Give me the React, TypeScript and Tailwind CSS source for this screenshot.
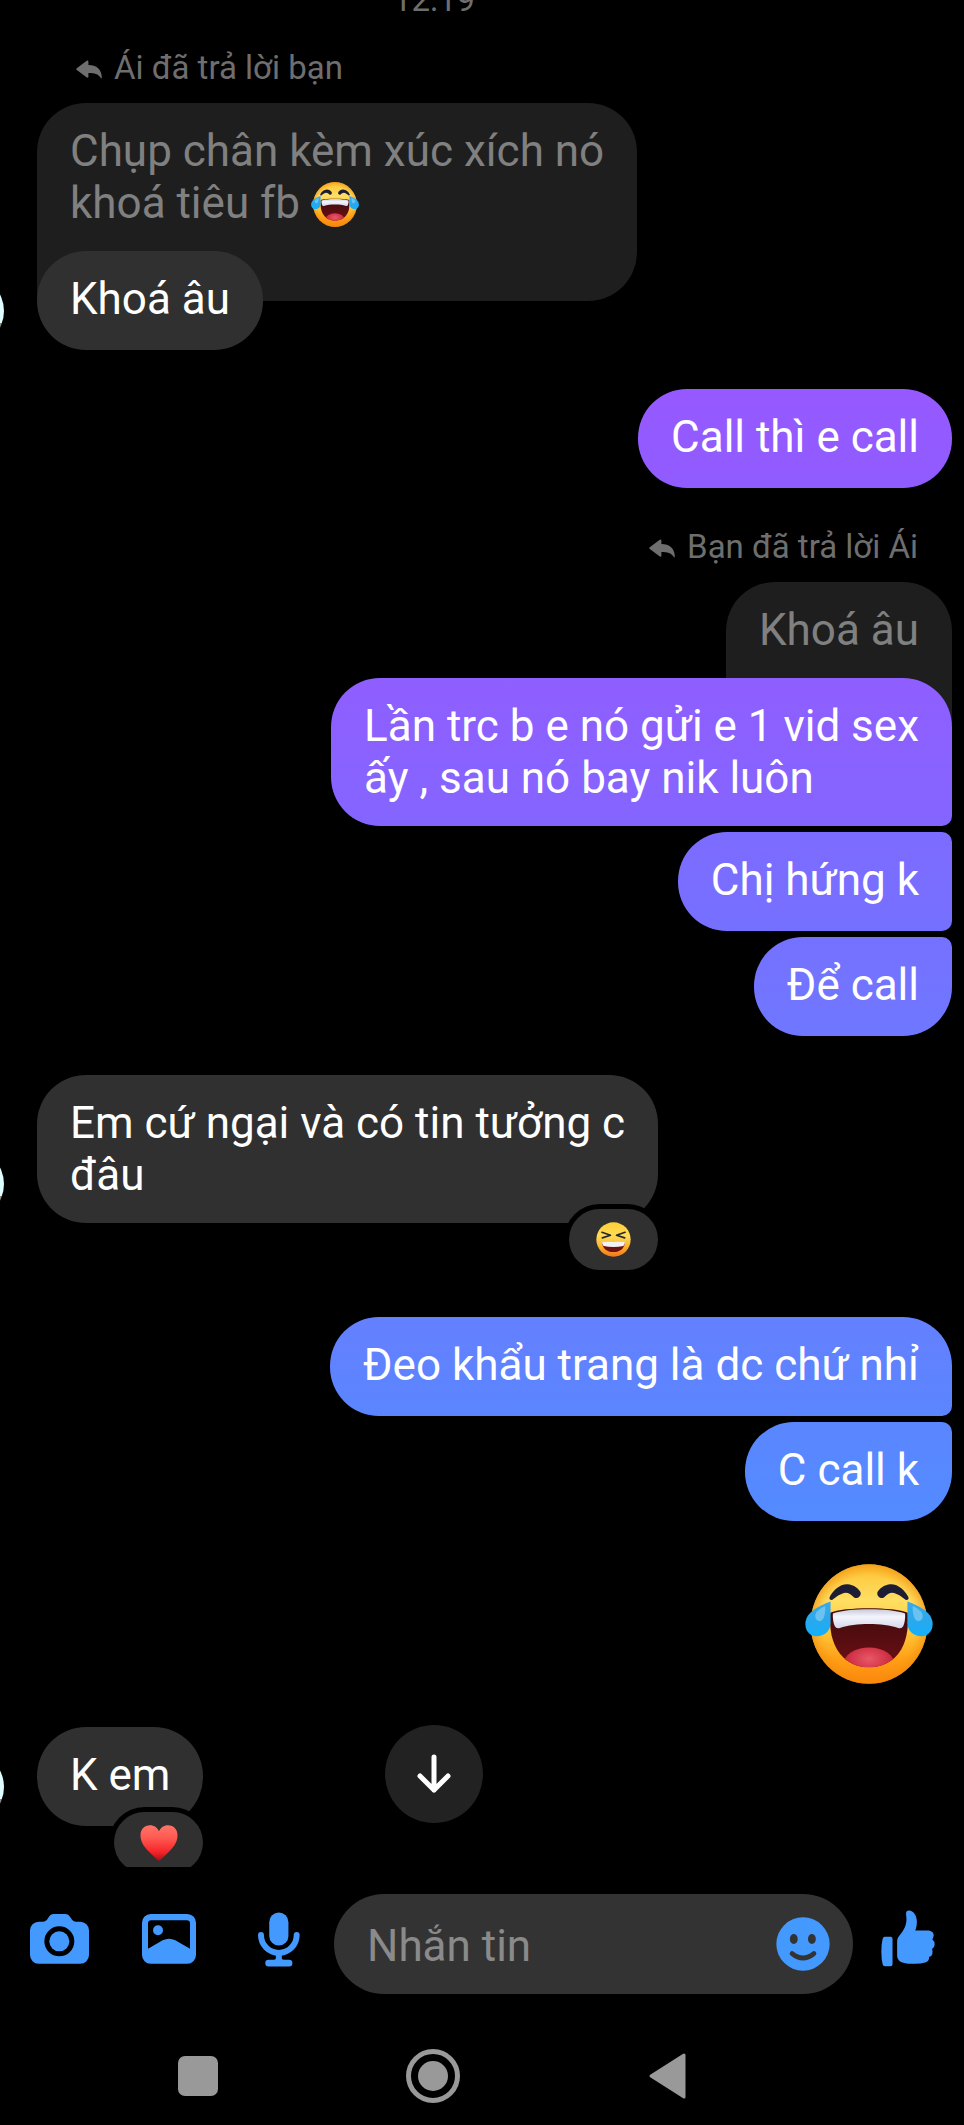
import { useId, type ReactNode } from "react";

// ---- emoji ----

const LaughEmoji = ({ className }: { className: string }) => {
  const id = useId();
  return (
    <svg viewBox="75 71 386 362" className={className} role="img" aria-label="😂">
      <defs>
        <linearGradient id={id + "face"} x1="0" y1="0" x2="0" y2="1">
          <stop offset="0" stopColor="#fdc132" />
          <stop offset="0.3" stopColor="#ffdf63" />
          <stop offset="0.55" stopColor="#ffc93a" />
          <stop offset="0.8" stopColor="#ff9f16" />
          <stop offset="1" stopColor="#ff830d" />
        </linearGradient>
        <radialGradient id={id + "shade"}>
          <stop offset="0.8" stopColor="#f59a10" stopOpacity="0" />
          <stop offset="1" stopColor="#f08a0a" stopOpacity="0.6" />
        </radialGradient>
        <linearGradient id={id + "mouth"} x1="0" y1="0" x2="0" y2="1">
          <stop offset="0" stopColor="#3d0a0c" />
          <stop offset="1" stopColor="#6f1015" />
        </linearGradient>
        <linearGradient id={id + "teeth"} x1="0" y1="0" x2="0" y2="1">
          <stop offset="0" stopColor="#c9cadb" />
          <stop offset="0.4" stopColor="#f4f5fd" />
          <stop offset="1" stopColor="#d3d6ec" />
        </linearGradient>
        <radialGradient id={id + "tongue"} cx="0.5" cy="0.35">
          <stop offset="0" stopColor="#e85868" />
          <stop offset="1" stopColor="#c9263a" />
        </radialGradient>
        <linearGradient id={id + "tear"} x1="0" y1="0" x2="0" y2="1">
          <stop offset="0" stopColor="#3aa9e8" />
          <stop offset="0.6" stopColor="#27a9ee" />
          <stop offset="1" stopColor="#12b0fb" />
        </linearGradient>
        <clipPath id={id + "clip"}>
          <path d="M151 218C190 200 345 200 385 218C388 270 380 320 347 352C302 393 233 393 190 352C156 318 148 270 151 218Z" />
        </clipPath>
      </defs>
      <ellipse cx="268" cy="252" rx="176" ry="180" fill={`url(#${id}face)`} />
      <ellipse cx="268" cy="252" rx="176" ry="180" fill={`url(#${id}shade)`} />
      <g clipPath={`url(#${id}clip)`}>
        <rect x="145" y="200" width="245" height="190" fill={`url(#${id}mouth)`} />
        <ellipse cx="268" cy="372" rx="76" ry="49" fill={`url(#${id}tongue)`} />
      </g>
      <path
        d="M159 220C200 203 336 203 377 220Q378 243 371 259Q367 267 356 264C310 248 226 248 180 264Q169 267 165 259Q158 243 159 220Z"
        fill={`url(#${id}teeth)`}
      />
      {[undefined, "translate(536 0) scale(-1 1)"].map((t, i) => (
        <g key={i} transform={t}>
          <path
            d="M149 171C159 151 180 131 203 132C222 133 239 146 243 158C244 171 232 177 223 172C214 164 207 158 198 158C182 160 170 170 158 179Q147 181 149 171Z"
            fill="#1d1d33"
          />
          <path
            d="M152 184L152 250C151 275 133 289 110 289C88 289 75 271 76 249C79 214 120 196 152 184Z"
            fill={`url(#${id}tear)`}
          />
          <path d="M136 198C120 206 108 214 106 226C105 240 116 245 124 242C134 237 137 215 136 198Z" fill="#a6dcf7" opacity="0.5" />
        </g>
      ))}
    </svg>
  );
};

const SquintEmoji = () => (
  <svg viewBox="135 92 106 106" className="h-[35px] w-[35px]" role="img" aria-label="😆">
    <defs>
      <linearGradient id="squint-face" x1="0" y1="0" x2="0" y2="1">
        <stop offset="0" stopColor="#fdcf35" />
        <stop offset="0.4" stopColor="#ffdb57" />
        <stop offset="0.7" stopColor="#fdb32c" />
        <stop offset="1" stopColor="#f4741c" />
      </linearGradient>
    </defs>
    <circle cx="188" cy="145" r="52" fill="url(#squint-face)" />
    <path d="M153 123L179 132L154 140M223 123L197 132L222 140" fill="none" stroke="#26262e" strokeWidth="5" strokeLinecap="round" strokeLinejoin="round" />
    <path d="M153 151Q188 156 223 151C222 172 208 183 188 183C168 183 154 172 153 151Z" fill="#6d1212" />
    <path d="M153 150Q188 155 223 150Q223 160 218 165Q188 171 158 165Q153 160 153 150Z" fill="#f2f1f4" />
  </svg>
);

const HeartEmoji = () => (
  <svg viewBox="422 374 114 109" className="h-[36px] w-[38px]" role="img" aria-label="❤️">
    <defs>
      <linearGradient id="heart-fill" x1="0" y1="0" x2="0" y2="1">
        <stop offset="0" stopColor="#ff7468" />
        <stop offset="0.35" stopColor="#ff5a52" />
        <stop offset="0.75" stopColor="#f6262b" />
        <stop offset="1" stopColor="#a80f16" />
      </linearGradient>
    </defs>
    <path
      d="M479 482C470 478 461 466 448 454C432 438 423 424 423 405C423 387 435 375 452 375C464 375 474 382 479 393C484 382 494 375 506 375C523 375 535 387 535 405C535 424 526 438 510 454C497 466 488 478 479 482Z"
      fill="url(#heart-fill)"
    />
  </svg>
);

// ---- icons ----

const ReplyIcon = () => (
  <svg viewBox="0 0 26 19" className="mt-[3px] h-[19px] w-[26px] fill-current" aria-hidden="true">
    <path d="M.8 8.2L10.4 1Q12.4-.2 12.4 2V5C20.5 5 25.8 9.5 25.8 17.6Q25.7 19.4 24.6 17.8C22.3 13.8 18.5 12.9 12.4 12.9V16.4Q12.4 18.5 10.5 17.3L.8 10Q-.3 9.1 .8 8.2Z" />
  </svg>
);

const CameraIcon = () => (
  <svg viewBox="89 102 177 150" className="h-[50px] w-[59px] fill-current" aria-hidden="true">
    <path
      fillRule="evenodd"
      d="M115 125h12c8 0 12-3 16-10c5-9 9-13 18-13h33c9 0 13 4 18 13c4 7 8 10 16 10h12a26 26 0 0 1 26 26v74a26 26 0 0 1-26 26H115a26 26 0 0 1-26-26v-74a26 26 0 0 1 26-26ZM132 184a45 45 0 1 0 90 0a45 45 0 1 0-90 0Z"
    />
    <circle cx="177" cy="184" r="30" />
  </svg>
);

const GalleryIcon = () => (
  <svg viewBox="426 102 162 150" className="h-[50px] w-[54px] fill-current" aria-hidden="true">
    <path
      fillRule="evenodd"
      d="M452 102h110a26 26 0 0 1 26 26v97a26 26 0 0 1-26 26H452a26 26 0 0 1-26-26v-97a26 26 0 0 1 26-26ZM454 121a10 10 0 0 0-10 10v75l44-25q19-9 38 0l44 25v-75a10 10 0 0 0-10-10Z"
    />
    <circle cx="474" cy="151" r="15" />
  </svg>
);

const MicIcon = () => (
  <svg viewBox="774 95 127 165" className="h-[55px] w-[42px] fill-current" aria-hidden="true">
    <rect x="808" y="96" width="58" height="100" rx="29" />
    <path d="M783 164a54 54 0 0 0 108 0" fill="none" stroke="currentColor" strokeWidth="18" strokeLinecap="round" />
    <path d="M828 220h18v14q0 5 8 5h14a9.500 9.500 0 0 1 0 20h-62a9.500 9.500 0 0 1 0-20h14q8 0 8-5Z" />
  </svg>
);

const SmileIcon = () => (
  <svg viewBox="107 110 164 164" className="h-[54px] w-[54px]" aria-hidden="true">
    <circle cx="189" cy="192" r="81" fill="currentColor" />
    <ellipse cx="161" cy="177" rx="12" ry="15" fill="#333" />
    <ellipse cx="216" cy="177" rx="12" ry="15" fill="#333" />
    <path d="M156 221Q189 248 222 221" fill="none" stroke="#333" strokeWidth="15" strokeLinecap="round" />
  </svg>
);

const LikeIcon = () => (
  <svg viewBox="422 88 164 172" className="h-[57px] w-[54px] fill-current" aria-hidden="true">
    <path d="M434 169h17q6 0 6 6v77q0 6-6 6h-17q-6 0-7-6q-4-16-4-38t4-39q1-6 7-6Z" />
    <path d="M471 182C471 173 476 167 483 159C494 144 501 128 499 110L498 98Q498 89 507 89C521 90 531 104 531 124C531 136 528 144 526 150H562C574 150 582 155 582 164Q582 171 578 176Q585 182 585 192Q585 201 577 206Q580 213 578 221Q576 228 568 230Q569 243 556 247Q545 251 525 251C498 251 483 248 476 240Q471 235 471 227Z" />
  </svg>
);

// ---- messages ----

const Avatar = () => (
  <div className="mb-[3px] -ml-[68px] h-[72px] w-[72px] shrink-0 rounded-full bg-linear-to-b from-[#dffcff] from-67% to-[#94877f] to-67%" />
);

const ReplyLabel = ({ mine, children }: { mine?: boolean; children: ReactNode }) => (
  <div
    className={`mb-4 flex items-center gap-3 text-[33px] leading-[38px] text-[#6e6e6e] ${
      mine ? "mt-10 self-end pr-[46px]" : "mt-[30px] pl-[76px]"
    }`}
  >
    <ReplyIcon />
    <span>{children}</span>
  </div>
);

const Quote = ({ mine, children }: { mine?: boolean; children: ReactNode }) => (
  <div
    className={`-mb-[50px] max-w-[622px] rounded-t-[49px] bg-[#1e1e1e] px-[33px] pt-[22px] pb-[72px] text-[#808080] ${
      mine ? "mr-3 self-end rounded-bl-[49px]" : "ml-[37px] self-start rounded-br-[49px]"
    }`}
  >
    {children}
  </div>
);

const Incoming = ({ reaction, children }: { reaction?: ReactNode; children: ReactNode }) => (
  <div className="relative flex items-end gap-[33px]">
    <Avatar />
    <div className="relative min-h-[99px] max-w-[622px] rounded-[49px] bg-[#303030] px-[33px] py-[22px]">
      {children}
      {reaction && (
        <div className="absolute top-full right-0 -mt-[14px] flex h-[61px] w-[89px] items-center justify-center rounded-full bg-[#303030] shadow-[0_0_0_5px_#000]">
          {reaction}
        </div>
      )}
    </div>
  </div>
);

const Outgoing = ({ className, children }: { className: string; children: ReactNode }) => (
  <div
    className={`relative mr-3 min-h-[99px] max-w-[622px] self-end rounded-l-[49px] bg-linear-to-b px-[33px] py-[22px] ${className}`}
  >
    {children}
  </div>
);

const Composer = () => (
  <form className="flex items-center py-[27px] pr-[29px] pl-[29px] text-[#4499ff]">
    <div className="mr-[25px] flex gap-[50px] pb-[10px]">
      <button type="button" aria-label="Camera" className="flex w-[60px] items-center justify-center">
        <CameraIcon />
      </button>
      <button type="button" aria-label="Gallery" className="flex w-[60px] items-center justify-center">
        <GalleryIcon />
      </button>
      <button type="button" aria-label="Voice" className="flex w-[60px] items-center justify-center">
        <MicIcon />
      </button>
    </div>
    <div className="flex h-[100px] min-w-0 flex-1 items-center rounded-full bg-[#333] pr-[23px] pl-[33px]">
      <input
        type="text"
        aria-label="Nhắn tin"
        placeholder="Nhắn tin"
        className="min-w-0 flex-1 bg-transparent pt-1 text-white outline-none placeholder:text-[#8a8a8a]"
      />
      <button type="button" aria-label="Emoji">
        <SmileIcon />
      </button>
    </div>
    <button type="button" aria-label="Like" className="ml-7 pb-3">
      <LikeIcon />
    </button>
  </form>
);

const SystemNav = () => (
  <nav className="grid grid-cols-3 place-items-center pt-7 pr-[179px] pb-[22px] pl-20 text-[#999]">
    <button type="button" aria-label="Recents" className="h-10 w-10 rounded-[7px] bg-current" />
    <button type="button" aria-label="Home" className="flex h-[54px] w-[54px] items-center justify-center rounded-full border-[5px] border-current">
      <span className="h-[30px] w-[30px] rounded-full bg-current" />
    </button>
    <button type="button" aria-label="Back">
      <svg viewBox="0 0 37 46" className="h-[46px] w-[37px]" aria-hidden="true">
        <path d="M2 23L35 2V44Z" fill="currentColor" stroke="currentColor" strokeWidth="3" strokeLinejoin="round" />
      </svg>
    </button>
  </nav>
);

const App = () => {
  return (
    <div className="min-h-screen overflow-hidden bg-black font-['Roboto','Noto_Sans',sans-serif] text-[44px] leading-[52px] text-white">
      <main className="relative flex flex-col overflow-hidden pb-[41px]">
        <time className="-mt-[19px] pr-24 text-center text-[33px] leading-[38px] text-[#6e6e6e]">12:19</time>

        <ReplyLabel>Ái đã trả lời bạn</ReplyLabel>
        <Quote>
          Chụp chân kèm xúc xích nó
          <br />
          khoá tiêu fb <LaughEmoji className="-mt-1 inline h-[45px] w-[48px]" />
        </Quote>
        <Incoming>Khoá âu</Incoming>

        <div className="mt-[39px] flex flex-col">
          <Outgoing className="rounded-r-[49px] from-[#9659ff] to-[#905cff]">Call thì e call</Outgoing>
        </div>

        <ReplyLabel mine>Bạn đã trả lời Ái</ReplyLabel>
        <Quote mine>Khoá âu</Quote>
        <div className="flex flex-col gap-[6px]">
          <Outgoing className="rounded-tr-[49px] rounded-br-[10px] from-[#8f5eff] to-[#8465ff]">
            Lần trc b e nó gửi e 1 vid sex
            <br />
            ấy , sau nó bay nik luôn
          </Outgoing>
          <Outgoing className="rounded-r-[10px] from-[#7d6bff] to-[#7570ff]">Chị hứng k</Outgoing>
          <Outgoing className="rounded-tr-[10px] rounded-br-[49px] from-[#7571ff] to-[#6f77ff]">Để call</Outgoing>
        </div>

        <div className="mt-[39px] mb-[94px]">
          <Incoming reaction={<SquintEmoji />}>
            Em cứ ngại và có tin tưởng c
            <br />
            đâu
          </Incoming>
        </div>

        <div className="flex flex-col gap-[6px]">
          <Outgoing className="rounded-tr-[49px] rounded-br-[10px] from-[#6480ff] to-[#5b85ff]">
            Đeo khẩu trang là dc chứ nhỉ
          </Outgoing>
          <Outgoing className="rounded-tr-[10px] rounded-br-[49px] from-[#5a86ff] to-[#538bff]">C call k</Outgoing>
        </div>

        <LaughEmoji className="my-[43px] mr-[31px] h-[120px] w-[128px] self-end" />

        <Incoming reaction={<HeartEmoji />}>K em</Incoming>

        <button
          type="button"
          aria-label="Scroll to latest"
          className="absolute bottom-11 left-[45%] flex h-[98px] w-[98px] -translate-x-1/2 items-center justify-center rounded-full bg-[#222]"
        >
          <svg viewBox="0 0 34 40" className="h-10 w-[34px]" aria-hidden="true">
            <path d="M17 3V36M3 22L17 36L31 22" fill="none" stroke="#fff" strokeWidth="5" strokeLinecap="round" strokeLinejoin="round" />
          </svg>
        </button>
      </main>

      <Composer />
      <SystemNav />
    </div>
  );
};

export default App;
